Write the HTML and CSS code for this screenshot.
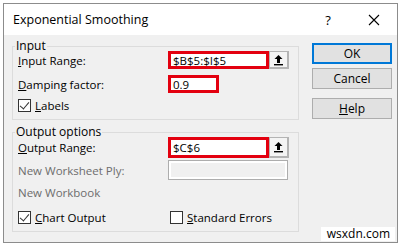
FILE: index.html
```html
<!DOCTYPE html>
<html lang="en">
<head>
    <meta charset="UTF-8">
    <meta name="viewport" content="width=device-width, initial-scale=1.0">
    <title>Exponential Smoothing</title>
    <link rel="stylesheet" href="styles.css">
</head>
<body>
    <div class="dialog">
        <div class="titlebar">
            <span class="title">Exponential Smoothing</span>
            <span class="help-q">?</span>
            <span class="close">
                <svg width="12" height="12" viewBox="0 0 12 12"><path d="M1 1L11 11M11 1L1 11" stroke="#000" stroke-width="1.1" fill="none"/></svg>
            </span>
        </div>
        <div class="body">
            <div class="groups">
                <fieldset class="group group-input">
                    <legend>Input</legend>
                    <div class="row row-range">
                        <label class="label"><u>I</u>nput Range:</label>
                        <div class="field red wide">$B$5:$I$5</div>
                        <div class="picker">
                            <svg width="11" height="12" viewBox="0 0 11 12"><path d="M5.5 1L1.5 5H4V9H7V5H9.5Z" fill="#000"/><rect x="1" y="10" width="9" height="1.4" fill="#000"/></svg>
                        </div>
                    </div>
                    <div class="row row-damp">
                        <label class="label"><u>D</u>amping factor:</label>
                        <div class="field red short">0.9</div>
                    </div>
                    <div class="row row-check">
                        <span class="check on"></span>
                        <span><u>L</u>abels</span>
                    </div>
                </fieldset>
                <fieldset class="group group-output">
                    <legend>Output options</legend>
                    <div class="row row-range">
                        <label class="label"><u>O</u>utput Range:</label>
                        <div class="field red wide tall">$C$6</div>
                        <div class="picker tall">
                            <svg width="11" height="12" viewBox="0 0 11 12"><path d="M5.5 1L1.5 5H4V9H7V5H9.5Z" fill="#000"/><rect x="1" y="10" width="9" height="1.4" fill="#000"/></svg>
                        </div>
                    </div>
                    <div class="row row-ply">
                        <label class="label disabled">New Worksheet Ply:</label>
                        <div class="field off"></div>
                    </div>
                    <div class="row row-book">
                        <label class="label disabled">New Workbook</label>
                    </div>
                    <div class="row row-check bottom">
                        <div class="opt">
                            <span class="check on"></span>
                            <span><u>C</u>hart Output</span>
                        </div>
                        <div class="opt">
                            <span class="check"></span>
                            <span><u>S</u>tandard Errors</span>
                        </div>
                    </div>
                </fieldset>
            </div>
            <div class="actions">
                <button class="btn default">OK</button>
                <button class="btn">Cancel</button>
                <button class="btn help"><u>H</u>elp</button>
            </div>
        </div>
        <div class="watermark">wsxdn.com</div>
    </div>
</body>
</html>
```

FILE: styles.css
```css
body {
    margin: 0;
    background-color: #ffffff;
    font-family: "Open Sans", "Noto Sans", sans-serif;
    font-size: 11.5px;
    color: #000;
}
.dialog {
    position: relative;
    margin: 3px 4px 0 3px;
    height: 240px;
    border: 1px solid #8c8c8c;
    background-color: #f0f0f0;
    box-sizing: border-box;
}
.titlebar {
    height: 31px;
    background-color: #ffffff;
    display: flex;
    align-items: center;
    padding-left: 9px;
}
.title {
    font-size: 12.5px;
    flex: 1;
}
.help-q {
    width: 46px;
    font-size: 13px;
    text-align: center;
}
.close {
    width: 46px;
    display: flex;
    justify-content: center;
}
.body {
    display: flex;
    padding: 4px 0 0 8px;
}
.groups {
    width: 287px;
}
.group {
    margin: 0;
    padding: 0 0 0 5px;
    border: 1px solid #dcdcdc;
    min-inline-size: 0;
}
.group legend {
    padding: 0 1px;
    margin-left: -3px;
    line-height: 14px;
    font-size: 12px;
}
.group-input {
    height: 81px;
    box-sizing: border-box;
}
.group-output {
    margin-top: 5px;
    height: 107px;
    box-sizing: border-box;
}
.row {
    display: flex;
    align-items: center;
}
.label {
    width: 150px;
}
.disabled {
    color: #6d6d6d;
}
.field {
    height: 18px;
    box-sizing: border-box;
    background-color: #ffffff;
    padding-left: 2px;
    line-height: 13px;
    font-size: 11.5px;
}
.red {
    border: 3px solid #e3000f;
}
.wide {
    width: 101px;
}
.short {
    width: 51px;
}
.tall {
    height: 21px !important;
    line-height: 15px;
}
.picker {
    width: 20px;
    height: 18px;
    box-sizing: border-box;
    border: 1px solid #b4b4b4;
    border-right-width: 2px;
    border-bottom-width: 2px;
    background-color: #f4f4f4;
    display: flex;
    align-items: center;
    justify-content: center;
}
.off {
    width: 120px;
    height: 20px;
    border: 1px solid #adadad;
    box-shadow: inset 0 0 0 2px #ffffff;
    background-color: #f0f0f0;
}
.group-input .row-range {
    margin-top: -2px;
}
.row-damp {
    margin-top: 6px;
}
.group-input .row-check {
    margin-top: 5px;
}
.group-output .row-range {
    margin-top: -2px;
}
.row-ply {
    margin-top: 2px;
}
.row-book {
    margin-top: 3px;
    height: 18px;
}
.row-check.bottom {
    margin-top: 9px;
}
.opt {
    display: flex;
    align-items: center;
    flex: none;
    width: 152px;
}
.check {
    width: 13px;
    height: 13px;
    box-sizing: border-box;
    border: 1px solid #333;
    background-color: #fff;
    margin-right: 4px;
    position: relative;
}
.check.on::after {
    content: "";
    position: absolute;
    left: 3px;
    top: 0px;
    width: 4px;
    height: 8px;
    border: solid #333;
    border-width: 0 1px 1px 0;
    transform: rotate(40deg);
}
.actions {
    display: flex;
    flex-direction: column;
    margin-left: 13px;
    padding-top: 4px;
}
.btn {
    width: 80px;
    height: 21px;
    font-family: inherit;
    font-size: 12px;
    background-color: #e1e1e1;
    border: 1px solid #adadad;
    padding: 0;
    margin-bottom: 4px;
}
.btn.default {
    border: 2px solid #0078d7;
}
.btn.help {
    margin-top: 5px;
}
.watermark {
    position: absolute;
    right: 2px;
    bottom: 1px;
    background-color: #ffffff;
    padding: 0 5px 0 6px;
    font-size: 12px;
    line-height: 14px;
}
```
